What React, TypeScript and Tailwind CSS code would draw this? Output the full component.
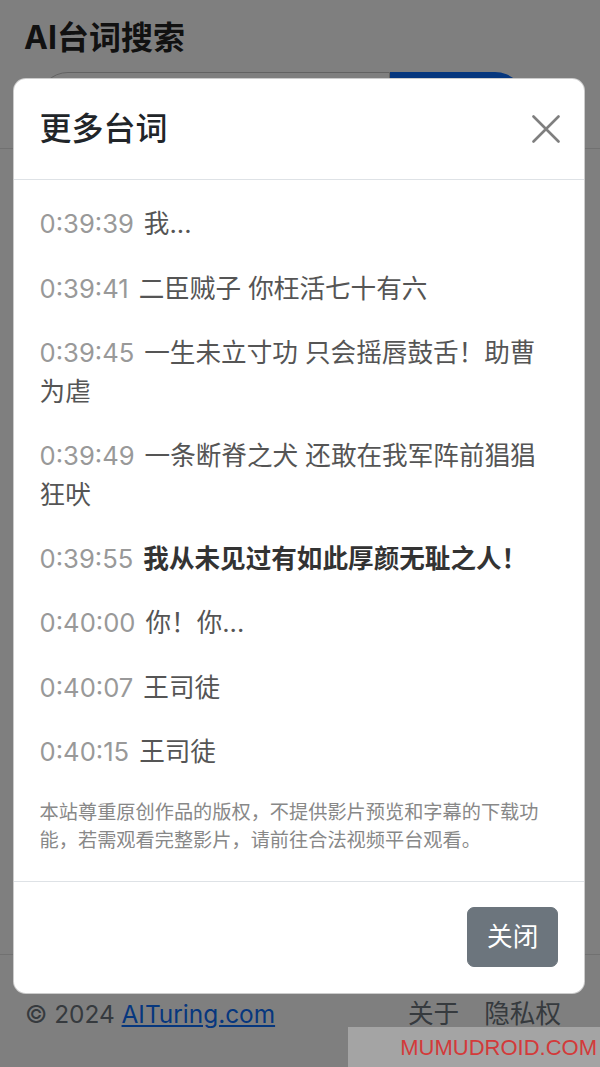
const lines: { t: string; text: string; bold?: boolean }[] = [
  { t: "0:39:39", text: "我..." },
  { t: "0:39:41", text: "二臣贼子 你枉活七十有六" },
  { t: "0:39:45", text: "一生未立寸功 只会摇唇鼓舌！助曹为虐" },
  { t: "0:39:49", text: "一条断脊之犬 还敢在我军阵前猖猖狂吠" },
  { t: "0:39:55", text: "我从未见过有如此厚颜无耻之人！", bold: true },
  { t: "0:40:00", text: "你！你..." },
  { t: "0:40:07", text: "王司徒" },
  { t: "0:40:15", text: "王司徒" },
];

function CloseIcon() {
  return (
    <svg width="28" height="28" viewBox="0 0 28 28" fill="none">
      <path d="M1.5 1.5 L26.5 26.5 M26.5 1.5 L1.5 26.5" stroke="#000" strokeOpacity="0.5" strokeWidth="2.6" strokeLinecap="round" />
    </svg>
  );
}

export default function App() {
  return (
    <div className="relative h-[1067px] w-[600px] overflow-hidden bg-white font-[Inter,'Noto_Sans_CJK_SC',sans-serif]">
      {/* page behind the modal */}
      <header className="h-[149px] border-b border-[#e3e3e3] px-[24px] pt-[14px]">
        <h1 className="text-[32px] font-bold leading-[48px] text-[#222]">AI台词搜索</h1>
        <div className="ml-[14px] mt-[10px] flex h-[60px] w-[487px]">
          <input
            className="w-0 min-w-0 flex-1 rounded-l-[30px] border border-[#c4c4c4] px-[20px] text-[25px] outline-none"
            readOnly
          />
          <button className="w-[135px] shrink-0 rounded-r-[30px] bg-[#0d6efd] text-[25px] text-white">搜索</button>
        </div>
      </header>
      <main className="h-[805px] bg-white" />
      <footer className="flex h-[113px] items-start justify-between border-t border-[#e3e3e3] px-[25px] pt-[40px] text-[24.4px] leading-[38px] text-[#6c757d]">
        <p>
          © 2024{" "}
          <a href="#" className="text-[#0d6efd] underline">
            AITuring.com
          </a>
        </p>
        <div className="mr-[14px] flex gap-[25px] text-[25.6px]">
          <span>关于</span>
          <span>隐私权</span>
        </div>
      </footer>

      {/* modal */}
      <div className="absolute inset-0 flex items-center bg-black/50 pt-[5px]">
        <div className="ml-[13px] w-[572px] overflow-hidden rounded-[12.8px] border border-black/20 bg-white">
          <div className="flex items-center justify-between border-b border-[#dee2e6] py-[25.6px] pl-[25.6px] pr-[24px]">
            <h5 className="text-[32px] font-medium leading-[48px] text-[#212529]">更多台词</h5>
            <button className="flex h-[28px] w-[28px] items-center justify-center">
              <CloseIcon />
            </button>
          </div>
          <div className="p-[25.6px]">
            {lines.map((l) => (
              <p
                key={l.t}
                className={`mb-[25.8px] pr-[4px] text-[25.6px] leading-[38.6px] ${
                  l.bold ? "font-bold text-[#333]" : "text-[#555]"
                }`}
              >
                <span className="mr-[10px] font-normal text-[#999]">{l.t}</span>
                {l.text}
              </p>
            ))}
            <p className="pr-[14px] text-[19.2px] leading-[28.8px] text-[#888]">
              本站尊重原创作品的版权，不提供影片预览和字幕的下载功能，若需观看完整影片，请前往合法视频平台观看。
            </p>
          </div>
          <div className="flex justify-end border-t border-[#dee2e6] p-[19.2px]">
            <button className="m-[6.4px] rounded-[7px] border border-[#6c757d] bg-[#6c757d] px-[19.2px] py-[9.6px] text-[25.6px] leading-[38.4px] text-white">
              关闭
            </button>
          </div>
        </div>
      </div>

      <div className="absolute bottom-0 right-0 flex h-[40px] w-[252px] items-center justify-end bg-[#a4a4a4] pr-[3px] font-['Liberation_Sans',sans-serif] text-[22px] text-[#d33a3a]">
        MUMUDROID.COM
      </div>
    </div>
  );
}
